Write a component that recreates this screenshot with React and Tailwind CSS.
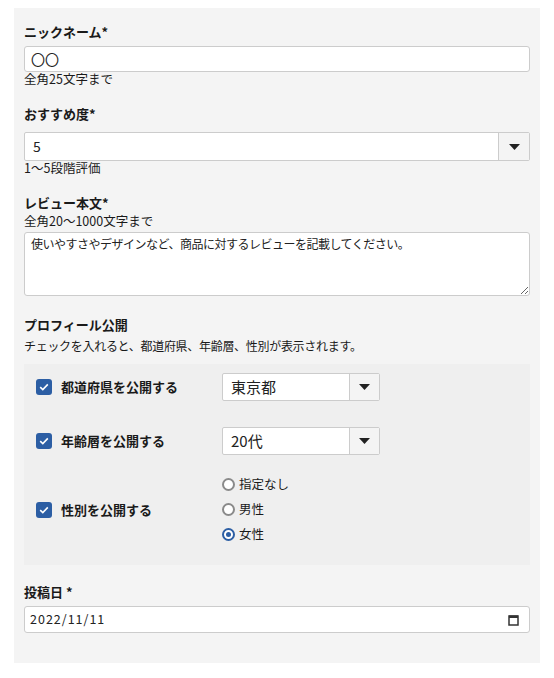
import React from "react";

const font = "font-['Noto_Sans_CJK_JP','Noto_Sans',sans-serif]";

const Arrow = () => (
    <svg width="11" height="6" viewBox="0 0 11 6">
        <path d="M0 0 L11 0 L5.5 6 Z" fill="#222" />
    </svg>
);

const Check = () => (
    <span className="w-4 h-4 rounded-[3px] bg-[#2c5ea4] flex items-center justify-center shrink-0">
        <svg width="10" height="8" viewBox="0 0 10 8">
            <path d="M1.2 4.2 L3.8 6.6 L8.8 1.4" fill="none" stroke="#fff" strokeWidth="1.6" />
        </svg>
    </span>
);

const Radio = ({ on }) =>
    on ? (
        <span className="w-[13px] h-[13px] rounded-full border-2 border-[#2c5ea4] bg-white flex items-center justify-center">
            <span className="w-[5px] h-[5px] rounded-full bg-[#2c5ea4]" />
        </span>
    ) : (
        <span className="w-[13px] h-[13px] rounded-full border-2 border-[#8a8a8a] bg-white" />
    );

const Label = ({ children }) => (
    <div className="text-[13px] leading-[18px] font-bold text-[#1a1a1a]">{children}</div>
);

const Help = ({ children, tight }) => (
    <div className={tight ? "text-[12px] leading-[14px] text-[#1a1a1a] tracking-[-0.3px]" : "text-[12.5px] leading-[14px] text-[#1a1a1a]"}>
        {children}
    </div>
);

const SmallSelect = ({ value }) => (
    <div className="w-[158px] h-[28px] flex bg-white border border-[#ccc] rounded-[2px]">
        <div className="flex-1 pl-[8px] text-[15px] leading-[26px] text-[#222]">{value}</div>
        <div className="w-[30px] border-l border-[#ccc] bg-[#f4f4f4] flex items-center justify-center">
            <Arrow />
        </div>
    </div>
);

export default function App() {
    const radios = [
        { label: "指定なし", on: false },
        { label: "男性", on: false },
        { label: "女性", on: true }
    ];
    return (
        <div className={`min-h-screen bg-white pt-2 px-[14px] ${font}`}>
            <div className="bg-[#f4f4f4] px-[10px] pt-[15px] pb-[30px]">
                <Label>ニックネーム*</Label>
                <div className="mt-[5px] h-[26px] bg-white border border-[#ccc] rounded-[3px] px-[6px] text-[14px] leading-[24px] text-[#222]">
                    〇〇
                </div>
                <Help>全角25文字まで</Help>

                <div className="mt-[19px]">
                    <Label>おすすめ度*</Label>
                </div>
                <div className="mt-[9px] h-[29px] flex bg-white border border-[#ccc] rounded-[2px]">
                    <div className="flex-1 pl-[8px] text-[14px] leading-[27px] text-[#222]">5</div>
                    <div className="w-[31px] border-l border-[#ccc] bg-[#f4f4f4] flex items-center justify-center">
                        <Arrow />
                    </div>
                </div>
                <Help>1〜5段階評価</Help>

                <div className="mt-[19px]">
                    <Label>レビュー本文*</Label>
                </div>
                <div className="mt-[2px]">
                    <Help>全角20〜1000文字まで</Help>
                </div>
                <textarea
                    className="mt-[4px] block w-full h-[64px] bg-white border border-[#ccc] rounded-[3px] px-[6px] py-[2px] text-[12px] leading-[18px] tracking-[-0.5px] placeholder:text-[#222] outline-none"
                    placeholder="使いやすさやデザインなど、商品に対するレビューを記載してください。"
                />

                <div className="mt-[20px]">
                    <Label>プロフィール公開</Label>
                </div>
                <div className="mt-[5px]">
                    <Help tight>チェックを入れると、都道府県、年齢層、性別が表示されます。</Help>
                </div>

                <div className="mt-[11px] bg-[#efefef] pl-[12px] pt-[9px] pb-[18px]">
                    <div className="flex items-center">
                        <div className="w-[186px] flex items-center gap-[9px]">
                            <Check />
                            <span className="text-[13px] font-bold text-[#1a1a1a]">都道府県を公開する</span>
                        </div>
                        <SmallSelect value="東京都" />
                    </div>
                    <div className="flex items-center mt-[26px]">
                        <div className="w-[186px] flex items-center gap-[9px]">
                            <Check />
                            <span className="text-[13px] font-bold text-[#1a1a1a]">年齢層を公開する</span>
                        </div>
                        <SmallSelect value="20代" />
                    </div>
                    <div className="flex items-center mt-[17px]">
                        <div className="w-[186px] flex items-center gap-[9px]">
                            <Check />
                            <span className="text-[13px] font-bold text-[#1a1a1a]">性別を公開する</span>
                        </div>
                        <div className="flex flex-col">
                            {radios.map((r) => (
                                <div key={r.label} className="h-[25px] flex items-center gap-[4px]">
                                    <Radio on={r.on} />
                                    <span className="text-[12.5px] text-[#1a1a1a]">{r.label}</span>
                                </div>
                            ))}
                        </div>
                    </div>
                </div>

                <div className="mt-[18px]">
                    <Label>投稿日 *</Label>
                </div>
                <div className="mt-[5px] h-[27px] bg-white border border-[#ccc] rounded-[3px] flex items-center justify-between pl-[5px] pr-[10px]">
                    <span className="text-[12.5px] tracking-[1px] text-[#222]">2022/11/11</span>
                    <svg width="11" height="12" viewBox="0 0 11 12">
                        <rect x="1" y="2" width="9" height="9" fill="none" stroke="#333" strokeWidth="1.5" />
                        <rect x="1" y="1.5" width="9" height="2.5" fill="#333" />
                    </svg>
                </div>
            </div>
        </div>
    );
}
